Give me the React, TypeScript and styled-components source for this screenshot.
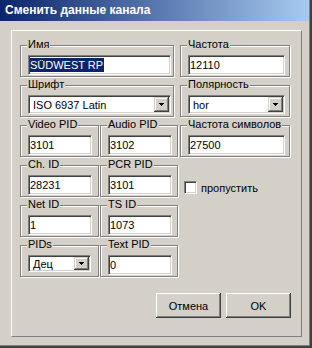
import styled, { createGlobalStyle } from "styled-components";

const GlobalStyle = createGlobalStyle`
  html, body {
    margin: 0;
    padding: 0;
    background: #d4d0c8;
  }
  body {
    font-family: "Liberation Sans", Arial, sans-serif;
    font-size: 11px;
    color: #000;
  }
`;

const Arrow = () => (
  <svg width="5" height="3" viewBox="0 0 5 3" shapeRendering="crispEdges">
    <rect x="0" y="0" width="5" height="1" fill="#000" />
    <rect x="1" y="1" width="3" height="1" fill="#000" />
    <rect x="2" y="2" width="1" height="1" fill="#000" />
  </svg>
);

const App = () => {
  return (
    <Window>
      <GlobalStyle />
      <TitleBar>Сменить данные канала</TitleBar>
      <Panel>
        <Grid>
          <Frame $span={2} $w={154}>
            <Legend>Имя</Legend>
            <Edit $w={143}>
              <Selected>SÜDWEST RP</Selected>
            </Edit>
          </Frame>
          <Frame $w={110}>
            <Legend>Частота</Legend>
            <Edit $w={97}>12110</Edit>
          </Frame>

          <Frame $span={2} $w={154}>
            <Legend>Шрифт</Legend>
            <Combo $w={143}>
              <ComboText>ISO 6937 Latin</ComboText>
              <DropButton>
                <Arrow />
              </DropButton>
            </Combo>
          </Frame>
          <Frame $w={110}>
            <Legend>Полярность</Legend>
            <Combo $w={97}>
              <ComboText>hor</ComboText>
              <DropButton>
                <Arrow />
              </DropButton>
            </Combo>
          </Frame>

          <Frame $w={79}>
            <Legend>Video PID</Legend>
            <Edit $w={64}>3101</Edit>
          </Frame>
          <Frame $w={78}>
            <Legend>Audio PID</Legend>
            <Edit $w={64}>3102</Edit>
          </Frame>
          <Frame $w={110}>
            <Legend>Частота символов</Legend>
            <Edit $w={97}>27500</Edit>
          </Frame>

          <Frame $w={79}>
            <Legend>Ch. ID</Legend>
            <Edit $w={64}>28231</Edit>
          </Frame>
          <Frame $w={78}>
            <Legend>PCR PID</Legend>
            <Edit $w={64}>3101</Edit>
          </Frame>
          <CheckRow>
            <CheckBox />
            пропустить
          </CheckRow>

          <Frame $w={79}>
            <Legend>Net ID</Legend>
            <Edit $w={64}>1</Edit>
          </Frame>
          <Frame $w={78}>
            <Legend>TS ID</Legend>
            <Edit $w={64}>1073</Edit>
          </Frame>
          <Empty />

          <Frame $w={79}>
            <Legend>PIDs</Legend>
            <Combo $w={63} $h={17}>
              <ComboText>Дец</ComboText>
              <DropButton>
                <Arrow />
              </DropButton>
            </Combo>
          </Frame>
          <Frame $w={78}>
            <Legend>Text PID</Legend>
            <Edit $w={64}>0</Edit>
          </Frame>
        </Grid>
        <ButtonRow>
          <Button>Отмена</Button>
          <Button>OK</Button>
        </ButtonRow>
      </Panel>
    </Window>
  );
};

export default App;

const Window = styled.div`
  width: 312px;
  height: 348px;
  box-sizing: border-box;
  padding-right: 3px;
  background: #d4d0c8;
  box-shadow: inset -2px -2px 0 #404040, inset -3px -3px 0 #808080;
  display: flex;
  flex-direction: column;
`;

const TitleBar = styled.div`
  height: 21px;
  padding-left: 5px;
  background: linear-gradient(to right, #0a246a, #a6caf0);
  color: #fff;
  font-weight: bold;
  font-size: 12px;
  line-height: 21px;
  white-space: nowrap;
`;

const Panel = styled.div`
  margin: 9px 0 0 11px;
  width: 291px;
  height: 307px;
  box-sizing: border-box;
  border: 1px solid;
  border-color: #fff #808080 #808080 #fff;
  padding: 14px 0 0 8px;
`;

const Grid = styled.div`
  display: grid;
  grid-template-columns: 80px 80px 111px;
  grid-auto-rows: 40px;
`;

const Frame = styled.div<{ $span?: number; $w: number }>`
  position: relative;
  grid-column: span ${(p) => p.$span ?? 1};
  width: ${(p) => p.$w}px;
  height: 32px;
  box-sizing: border-box;
  border: 1px solid #808080;
  box-shadow: 1px 1px 0 #fff, inset 1px 1px 0 #fff;
  padding: 9px 0 0 7px;
`;

const Legend = styled.span`
  position: absolute;
  top: -8px;
  left: 6px;
  padding: 0 1px;
  background: #d4d0c8;
  line-height: 13px;
  white-space: nowrap;
`;

const Sunken = styled.div<{ $w: number; $h?: number }>`
  width: ${(p) => p.$w}px;
  height: ${(p) => p.$h ?? 20}px;
  box-sizing: border-box;
  background: #fff;
  border: 1px solid;
  border-color: #808080 #fff #fff #808080;
  box-shadow: inset 1px 1px 0 #404040, inset -1px -1px 0 #d4d0c8;
  display: flex;
  align-items: center;
  white-space: nowrap;
`;

const Edit = styled(Sunken)`
  padding: 0 1px;
`;

const Selected = styled.span`
  background: #0a246a;
  color: #fff;
  padding: 1px 1px 1px 0;
`;

const Combo = styled(Sunken)`
  height: ${(p) => p.$h ?? 19}px;
  padding: 1px;
`;

const ComboText = styled.span`
  flex: 1;
  padding-left: 3px;
`;

const DropButton = styled.div`
  width: 15px;
  align-self: stretch;
  background: #d4d0c8;
  box-shadow: inset -1px -1px 0 #404040, inset 1px 1px 0 #d4d0c8,
    inset -2px -2px 0 #808080, inset 2px 2px 0 #fff;
  display: flex;
  align-items: center;
  justify-content: center;
`;

const CheckRow = styled.div`
  display: flex;
  align-items: center;
  align-self: start;
  gap: 4px;
  height: 13px;
  padding: 16px 0 0 4px;
`;

const CheckBox = styled.div`
  width: 13px;
  height: 13px;
  box-sizing: border-box;
  background: #fff;
  border: 1px solid;
  border-color: #808080 #fff #fff #808080;
  box-shadow: inset 1px 1px 0 #404040, inset -1px -1px 0 #d4d0c8;
`;

const Empty = styled.div``;

const ButtonRow = styled.div`
  width: 271px;
  margin-top: 8px;
  display: flex;
  justify-content: flex-end;
  gap: 5px;
`;

const Button = styled.button`
  width: 65px;
  height: 25px;
  padding: 0;
  border: none;
  background: #d4d0c8;
  box-shadow: inset -1px -1px 0 #404040, inset 1px 1px 0 #fff,
    inset -2px -2px 0 #808080, inset 2px 2px 0 #d4d0c8;
  font-family: "Liberation Sans", Arial, sans-serif;
  font-size: 11px;
  color: #000;
`;
